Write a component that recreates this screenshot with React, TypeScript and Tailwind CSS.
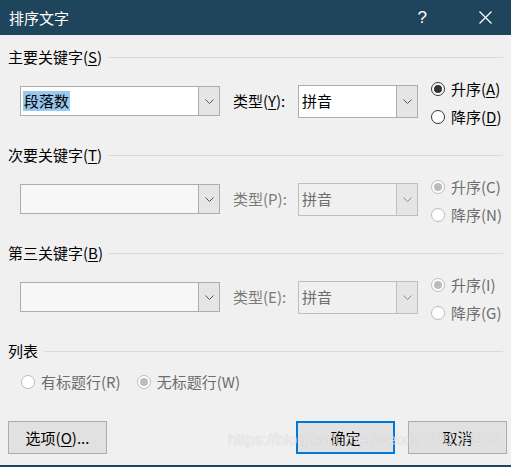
import React from "react";

function Chevron({ disabled }: { disabled?: boolean }) {
  return (
    <svg width="9" height="5" viewBox="0 0 9 5" className="block">
      <polyline
        points="0.5,0.5 4.5,4.5 8.5,0.5"
        fill="none"
        stroke={disabled ? "#8a8a8a" : "#555555"}
        strokeWidth="1"
      />
    </svg>
  );
}

function Radio({ checked, disabled }: { checked?: boolean; disabled?: boolean }) {
  return (
    <span
      className={
        disabled
          ? "inline-flex w-[14px] h-[14px] rounded-full border border-[#bcbcbc] bg-white items-center justify-center shrink-0"
          : "inline-flex w-[14px] h-[14px] rounded-full border border-[#333333] bg-white items-center justify-center shrink-0"
      }
    >
      {checked ? (
        <span
          className={
            disabled
              ? "w-[8px] h-[8px] rounded-full bg-[#bcbcbc]"
              : "w-[8px] h-[8px] rounded-full bg-[#333333]"
          }
        />
      ) : null}
    </span>
  );
}

function RadioLabel({
  checked,
  disabled,
  children,
}: {
  checked?: boolean;
  disabled?: boolean;
  children: React.ReactNode;
}) {
  return (
    <div className="flex items-center h-[28px] gap-[6px]">
      <Radio checked={checked} disabled={disabled} />
      <span className={disabled ? "text-[#6d6d6d] whitespace-nowrap" : "text-black whitespace-nowrap"}>
        {children}
      </span>
    </div>
  );
}

function Section({ children }: { children: React.ReactNode }) {
  return (
    <div className="flex items-center h-[20px]">
      <span className="text-black whitespace-nowrap">{children}</span>
      <div className="flex-1 h-px bg-[#dadada] ml-[6px]" />
    </div>
  );
}

function KeyRow({
  enabled,
  typeLabel,
  up,
  down,
}: {
  enabled: boolean;
  typeLabel: React.ReactNode;
  up: React.ReactNode;
  down: React.ReactNode;
}) {
  return (
    <div className="flex items-center h-[50px] pl-[12px]">
      {enabled ? (
        <div className="flex w-[200px] h-[30px] border border-[#adadad] bg-white">
          <div className="flex-1 flex items-center pl-[2px]">
            <span className="bg-[#99c9ef] text-black text-[15px] leading-[20px] px-[1px]">段落数</span>
          </div>
          <div className="w-[21px] h-full flex items-center justify-center bg-[#e5e5e5] border-l border-[#adadad]">
            <Chevron />
          </div>
        </div>
      ) : (
        <div className="flex w-[200px] h-[30px] border border-[#adadad] bg-[#f7f7f7]">
          <div className="flex-1" />
          <div className="w-[21px] h-full flex items-center justify-center bg-[#e5e5e5] border-l border-[#adadad]">
            <Chevron />
          </div>
        </div>
      )}
      <div
        className={
          enabled
            ? "w-[65px] ml-[13px] text-black whitespace-nowrap"
            : "w-[65px] ml-[13px] text-[#7a7a7a] whitespace-nowrap"
        }
      >
        {typeLabel}
      </div>
      {enabled ? (
        <div className="flex w-[120px] h-[33px] border border-[#adadad] bg-white">
          <div className="flex-1 flex items-center pl-[3px] text-[15px] text-black">拼音</div>
          <div className="w-[21px] h-full flex items-center justify-center bg-[#e5e5e5] border-l border-[#adadad]">
            <Chevron />
          </div>
        </div>
      ) : (
        <div className="flex w-[120px] h-[33px] border border-[#bfbfbf] bg-[#f0f0f0]">
          <div className="flex-1 flex items-center pl-[3px] text-[15px] text-[#6d6d6d]">拼音</div>
          <div className="w-[21px] h-full flex items-center justify-center bg-[#e5e5e5] border-l border-[#bfbfbf]">
            <Chevron disabled />
          </div>
        </div>
      )}
      <div className="flex flex-col ml-[13px] pt-[3px]">
        <RadioLabel checked disabled={!enabled}>
          {up}
        </RadioLabel>
        <RadioLabel disabled={!enabled}>{down}</RadioLabel>
      </div>
    </div>
  );
}

export default function App() {
  return (
    <div className="relative w-[511px] h-[467px] bg-[#f0f0f0] flex flex-col overflow-hidden font-['Noto_Sans_CJK_SC','Noto_Sans',sans-serif] text-[15px] leading-[20px]">
      <div className="h-[35px] bg-[#1f455c] flex items-center text-white shrink-0">
        <span className="ml-[9px] text-[15px]">排序文字</span>
        <span className="ml-auto mr-[52px] text-[17px] font-['Liberation_Sans',sans-serif]">?</span>
        <svg width="13" height="13" viewBox="0 0 13 13" className="mr-[19px]">
          <line x1="0.5" y1="0.5" x2="12.5" y2="12.5" stroke="white" strokeWidth="1.2" />
          <line x1="12.5" y1="0.5" x2="0.5" y2="12.5" stroke="white" strokeWidth="1.2" />
        </svg>
      </div>

      <div className="flex flex-col px-[8px]">
        <div className="mt-[12px]">
          <Section>
            主要关键字(<span className="underline underline-offset-2">S</span>)
          </Section>
        </div>
        <div className="mt-[9px]">
          <KeyRow
            enabled
            typeLabel={
              <>
                类型(<span className="underline underline-offset-2">Y</span>):
              </>
            }
            up={
              <>
                升序(<span className="underline underline-offset-2">A</span>)
              </>
            }
            down={
              <>
                降序(<span className="underline underline-offset-2">D</span>)
              </>
            }
          />
        </div>

        <div className="mt-[19px]">
          <Section>
            次要关键字(<span className="underline underline-offset-2">T</span>)
          </Section>
        </div>
        <div className="mt-[9px]">
          <KeyRow enabled={false} typeLabel="类型(P):" up="升序(C)" down="降序(N)" />
        </div>

        <div className="mt-[19px]">
          <Section>
            第三关键字(<span className="underline underline-offset-2">B</span>)
          </Section>
        </div>
        <div className="mt-[9px]">
          <KeyRow enabled={false} typeLabel="类型(E):" up="升序(I)" down="降序(G)" />
        </div>

        <div className="mt-[19px]">
          <Section>列表</Section>
        </div>
        <div className="mt-[11px] flex items-center h-[20px] pl-[13px]">
          <div className="flex items-center gap-[6px]">
            <Radio disabled />
            <span className="text-[#6d6d6d]">有标题行(R)</span>
          </div>
          <div className="flex items-center gap-[6px] ml-[16px]">
            <Radio checked disabled />
            <span className="text-[#6d6d6d]">无标题行(W)</span>
          </div>
        </div>

        <div className="mt-[29px] flex items-center -mr-[4px]">
          <button className="w-[99px] h-[33px] border border-[#adadad] bg-[#e1e1e1] text-black">
            选项(<span className="underline underline-offset-2">O</span>)...
          </button>
          <button className="ml-auto w-[99px] h-[33px] border-2 border-[#0078d7] bg-[#e1e1e1] text-black">
            确定
          </button>
          <button className="ml-[13px] w-[99px] h-[33px] border border-[#adadad] bg-[#e1e1e1] text-black">
            取消
          </button>
        </div>
      </div>

      <div className="mt-auto h-[2px] bg-[#1f455c] shrink-0" />

      <div className="absolute left-[228px] top-[430px] text-[16px] leading-[20px] text-white/60 font-['Liberation_Sans',sans-serif] whitespace-nowrap [text-shadow:0_0_1px_rgba(120,120,120,0.35)] pointer-events-none">
        https://blog.csdn.net/weixin_48208932
      </div>
    </div>
  );
}
